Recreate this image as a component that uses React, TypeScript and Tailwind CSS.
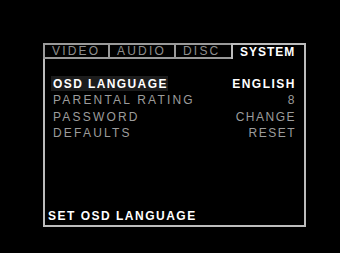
export default function App() {
  const tabs = [
    { name: 'VIDEO', w: 'w-[65px]' },
    { name: 'AUDIO', w: 'w-[66px]' },
    { name: 'DISC', w: 'w-[57px]' },
  ];
  const rows = [
    { label: 'PARENTAL RATING', value: '8' },
    { label: 'PASSWORD', value: 'CHANGE' },
    { label: 'DEFAULTS', value: 'RESET' },
  ];

  return (
    <div
      className="w-[340px] h-[253px] bg-black overflow-hidden pt-[43px] pl-[43px]"
      style={{ fontFamily: '"Liberation Sans", Arial, sans-serif' }}
    >
      <div className="w-[263px] flex flex-col">
        {/* Tabs */}
        <div className="flex h-[16px]">
          {tabs.map((t) => (
            <div
              key={t.name}
              className={`${t.w} border-l-2 border-t-2 border-b-2 border-[#9a9a9a] flex items-center pl-[7px] text-[12px] leading-none tracking-[2.2px] text-[#8e8e8e]`}
            >
              {t.name}
            </div>
          ))}
          <div className="flex-1 border-l-2 border-t-2 border-r-2 border-[#bcbcbc] flex items-center pl-[7px] text-[12px] leading-none font-bold tracking-[1px] text-white">
            SYSTEM
          </div>
        </div>

        {/* Panel */}
        <div className="h-[168px] border-l-2 border-r-2 border-b-2 border-[#bcbcbc] flex flex-col">
          <div className="pt-[16px] pl-[6px] pr-[8px] flex flex-col">
            <div className="flex items-center justify-between h-[17px]">
              <span className="bg-[#1c1c1c] pl-[2px] pr-0 h-[15px] flex items-center text-[12px] font-bold tracking-[1.4px] text-white">
                OSD LANGUAGE
              </span>
              <span className="text-[12px] font-bold tracking-[1.5px] text-white">ENGLISH</span>
            </div>
            {rows.map((r) => (
              <div key={r.label} className="flex items-center justify-between h-[16.5px] pl-[2px]">
                <span className="text-[12px] tracking-[2.2px] text-[#9c9c9c]">{r.label}</span>
                <span className="text-[12px] tracking-[1.5px] text-[#9c9c9c]">{r.value}</span>
              </div>
            ))}
          </div>
          <div className="mt-auto pl-[3px] pb-[3px] text-[12px] leading-none font-bold tracking-[1.5px] text-white">
            SET OSD LANGUAGE
          </div>
        </div>
      </div>
    </div>
  );
}
